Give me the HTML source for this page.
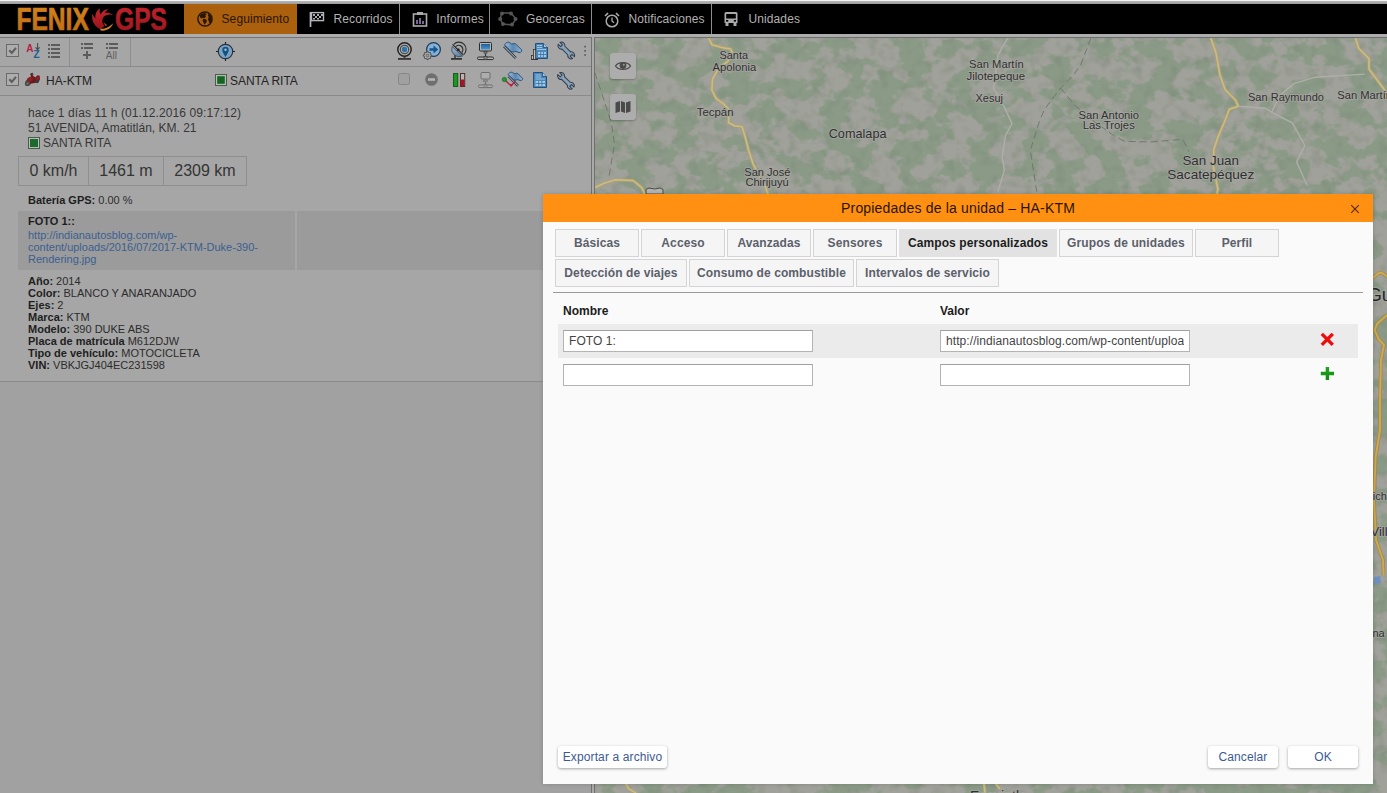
<!DOCTYPE html>
<html lang="es">
<head>
<meta charset="utf-8">
<title>Fenix GPS</title>
<style>
*{box-sizing:border-box;margin:0;padding:0}
html,body{width:1387px;height:793px;overflow:hidden}
body{position:relative;background:#a3a3a3;font-family:"Liberation Sans",sans-serif;font-size:12px;color:#222}
.abs{position:absolute}
/* top */
#topwhite{left:0;top:0;width:1387px;height:1px;background:#f4f4f4}
#topgray{left:0;top:1px;width:1387px;height:3px;background:linear-gradient(#b8b8b8,#9a9a9a)}
#hdr{left:0;top:4px;width:1387px;height:30px;background:#000}
#hdrsub{left:0;top:34px;width:1387px;height:3px;background:#adadad}
.mi{position:absolute;top:0;height:30px;color:#b2b2b2;font-size:12px;letter-spacing:.1px;line-height:31px;white-space:nowrap}
.mi .sep{position:absolute;right:0;top:0;width:1px;height:30px;background:#8c8c8c}
.mi svg{position:absolute;left:13px;top:7px}
.mi span{position:absolute;left:37.500px;top:0}
.mi.act{background:#aa600d;color:#2a1500}
/* left panel */
#lp{left:0;top:37px;width:591px;height:345px;background:#a6a6a6;border-top:1px solid #727272}
#lpbot{left:0;top:381px;width:591px;height:412px;background:#a1a1a1;border-top:1px solid #8b8b8b}
#split{left:591px;top:37px;width:4px;height:756px;background:#a9a9a9;border-left:1px solid #707070;border-right:1px solid #707070}
.hl{position:absolute;left:0;width:591px;height:1px;background:#8b8b8b}
.vl{position:absolute;width:1px;background:#8b8b8b}
.cb{position:absolute;width:12px;height:12px;border:1px solid #6f6f6f;background:#aeaeae}
.t12{position:absolute;font-size:12px;line-height:15px;color:#232323;white-space:nowrap}
.t11{position:absolute;font-size:11px;line-height:12px;color:#2c2c2c;white-space:nowrap}
.t11 b{color:#1e1e1e}
.gsq{position:absolute;width:11px;height:11px;border:1px solid #2b5a35;background:#a9b5aa}
.gsq i{position:absolute;left:1px;top:1px;width:7px;height:7px;background:#1f6b34}
/* map */
#map{left:595px;top:38px;width:792px;height:755px;background:#a0a39b;overflow:hidden}
.mbtn{position:absolute;width:26px;height:26px;border-radius:3px;background:#adadad;box-shadow:0 1px 2px rgba(0,0,0,.25)}
/* dialog */
#dlg{left:543px;top:194px;width:830px;height:590px;background:#fafafa;box-shadow:0 0 4px rgba(0,0,0,.18)}
#dtitle{left:0;top:0;width:830px;height:28px;background:#ff9012;color:#2a1400;font-size:14px;letter-spacing:.18px;line-height:28px;text-align:center}
.tab{position:absolute;height:28px;border:1px solid #d4d4d4;background:#f5f5f5;color:#5b606b;font-weight:bold;font-size:12px;letter-spacing:.1px;line-height:26px;text-align:center;white-space:nowrap}
.tab.sel{background:#e2e2e2;border-color:#e2e2e2;color:#1c1c1c}
.inp{position:absolute;width:250px;height:22px;background:#fff;border:1px solid #b4b4b4;border-top-color:#a0a0a0;font-size:12px;letter-spacing:.08px;line-height:20px;color:#444;padding:0 5px;white-space:nowrap}
.inp span{display:block;width:238px;height:20px;overflow:hidden}
.btn{position:absolute;height:22px;background:#fff;border-radius:3px;box-shadow:0 1px 3px rgba(0,0,0,.35);color:#3d5a92;font-size:12px;letter-spacing:.12px;line-height:22px;text-align:center;white-space:nowrap}
</style>
</head>
<body>
<div class="abs" id="topwhite"></div>
<div class="abs" id="topgray"></div>
<div class="abs" id="hdr">
<svg class="abs" style="left:0;top:0" width="184" height="30" viewBox="0 0 184 30">
<defs><linearGradient id="lgo" x1="0" y1="0" x2="0" y2="1"><stop offset="0" stop-color="#d6871f"/><stop offset="1" stop-color="#bd6a12"/></linearGradient>
<linearGradient id="lgr" x1="0" y1="0" x2="0" y2="1"><stop offset="0" stop-color="#c4262c"/><stop offset="1" stop-color="#9a141c"/></linearGradient></defs>
<text x="16.500" y="26" font-family="Liberation Sans" font-weight="bold" font-size="30.500" fill="url(#lgo)" stroke="url(#lgo)" stroke-width=".700" textLength="72.300" lengthAdjust="spacingAndGlyphs">FENIX</text>
<text x="115" y="26" font-family="Liberation Sans" font-weight="bold" font-size="30.500" fill="url(#lgr)" stroke="url(#lgr)" stroke-width=".600" textLength="52" lengthAdjust="spacingAndGlyphs">GPS</text>
<g id="phoenix"><path d="M113.300 11.300 C110.500 9.800 106.500 10.200 104 12.500 C101.500 15 101.800 19.500 104.500 21.800 L100.500 25.200 C96 23.500 91 18.500 92.300 9.800 C93.200 12 94.200 13.300 95.300 14.200 C95 10 96.500 6.500 100 4.200 C99.300 6.800 99.600 9 100.600 10.600 C102 7.200 105 5 108.400 5.300 C106.500 6.500 105.300 7.800 104.800 9.200 C107.500 8.200 111 9 113.300 11.300 Z" fill="url(#lgr)"/><path d="M100.300 24.800 C104.500 25.300 110 23 112.900 19.300 C112.200 23.800 106.500 27.500 100.500 26.500 Z" fill="#d08a2a"/><path d="M103.300 18.300 L107 21 L105.800 22.200 Z" fill="#b3501e"/></g>
</svg>
<div class="mi act" style="left:184px;width:112.800px"><svg width="16" height="16" viewBox="0 0 16 16"><circle cx="8" cy="8" r="7.100" fill="none" stroke="#2a1500" stroke-width="1.500"/><path d="M2.800 4.600 L5 2.600 L8.400 2 L9.600 3.400 L8.200 4.600 L9 5.800 L7.400 7.200 L5.800 6.800 L4.600 7.600 L3.200 6.400 Z M6.200 7.800 L8.800 8.200 L10 9.800 L9 11.800 L7.600 13.800 L6.600 11.800 L5.600 9.600 Z M11.400 2.800 L13.600 4.400 L14.600 6.600 L14.800 9 L13.800 11.600 L12.400 12.200 L11.600 9.800 L10.800 8 L11.800 6.200 L10.800 4.600 Z" fill="#2a1500"/></svg><span>Seguimiento</span></div>
<div class="mi" style="left:296px;width:104px"><svg width="16" height="16" viewBox="0 0 16 16"><path d="M1.500 1 V16" stroke="#b4b4c0" stroke-width="1.700" fill="none"/><rect x="2.500" y="1.600" width="12" height="8" fill="none" stroke="#b4b4c0" stroke-width="1.400"/><path d="M4 3h2v2H4zM8 3h2v2H8zM12 3h2v2h-2zM6 5h2v2H6zM10 5h2v2h-2zM4 7h2v1.5H4zM8 7h2v1.5H8z" fill="#aaa"/></svg><span>Recorridos</span><i class="sep"></i></div>
<div class="mi" style="left:398.800px;width:91.200px"><svg width="16" height="16" viewBox="0 0 16 16"><rect x="1.5" y="3" width="13" height="12" fill="none" stroke="#aaa" stroke-width="1.6"/><rect x="5" y="1" width="6" height="3" fill="#aaa"/><path d="M5 9v4M8 7v6M11 10v3" stroke="#9a7fc0" stroke-width="1.6"/></svg><span>Informes</span><i class="sep"></i></div>
<div class="mi" style="left:488.500px;width:103.500px"><svg style="left:9px" width="20" height="16" viewBox="0 0 20 16"><path d="M4 2 L13 2 L18 8 L14 14 L5 13 L2 8 Z" fill="none" stroke="#555" stroke-width="1.4"/><g fill="#555"><circle cx="4" cy="2.5" r="2"/><circle cx="13" cy="2.5" r="2"/><circle cx="17.5" cy="8" r="2"/><circle cx="14" cy="13.5" r="2"/><circle cx="5" cy="13" r="2"/><circle cx="2.2" cy="8" r="2"/></g></svg><span>Geocercas</span><i class="sep"></i></div>
<div class="mi" style="left:591px;width:121px"><svg style="left:12.500px;top:7.500px" width="16" height="16" viewBox="0 0 16 16"><circle cx="8" cy="9" r="5.800" fill="none" stroke="#aaa" stroke-width="1.5"/><path d="M8 5.5V9l2 1.7" fill="none" stroke="#aaa" stroke-width="1.3"/><path d="M1 4 L4 1.2 M15 4 L12 1.2" stroke="#aaa" stroke-width="1.6"/></svg><span>Notificaciones</span><i class="sep"></i></div>
<div class="mi" style="left:711px;width:100px"><svg style="left:12px" width="16" height="16" viewBox="0 0 16 16"><path d="M1.5 2.5 Q1.5 1 3 1 H13 Q14.500 1 14.500 2.500 V12 H1.500 Z" fill="#aaa"/><rect x="3.2" y="3" width="9.600" height="4.500" fill="#000"/><rect x="3" y="9" width="2.200" height="1.600" fill="#000"/><rect x="10.800" y="9" width="2.200" height="1.600" fill="#000"/><rect x="2.500" y="12" width="3" height="3" fill="#aaa"/><rect x="10.500" y="12" width="3" height="3" fill="#aaa"/></svg><span>Unidades</span></div>
</div>
<div class="abs" id="hdrsub"></div>
<div class="abs" id="lp">
<svg class="abs" style="left:0;top:-38px" width="591" height="100" viewBox="0 0 591 100">
<defs>
<linearGradient id="gw" x1="0" y1="0" x2="1" y2="1"><stop offset="0" stop-color="#9db8d0"/><stop offset="1" stop-color="#56799c"/></linearGradient>
<linearGradient id="gsc" x1="0" y1="0" x2="0" y2="1"><stop offset="0" stop-color="#1f5f96"/><stop offset="1" stop-color="#4f93c6"/></linearGradient>
<linearGradient id="gfl" x1="0" y1="0" x2="1" y2="0"><stop offset="0" stop-color="#9dbcd8"/><stop offset=".5" stop-color="#5d87b0"/><stop offset="1" stop-color="#8fb3d4"/></linearGradient>
</defs>
<!-- lines -->
<rect x="0" y="66" width="591" height="1" fill="#8a8a8a"/>
<rect x="0" y="95" width="591" height="1" fill="#8a8a8a"/>
<rect x="69" y="38" width="1" height="28" fill="#8e8e8e"/>
<rect x="130" y="38" width="1" height="28" fill="#8e8e8e"/>
<!-- checkboxes -->
<g id="cbx"><rect x="6.500" y="44.500" width="12" height="12" fill="#adadad" stroke="#6a6a6a"/><path d="M9.300 50.300 L11.800 53 L16 47.800" fill="none" stroke="#5e5e5e" stroke-width="2.100"/></g>
<use href="#cbx" y="29"/>
<!-- AZ -->
<text x="26.300" y="52.300" font-family="Liberation Sans" font-weight="bold" font-size="10" fill="#b51f45">A</text>
<text x="33.600" y="57.800" font-family="Liberation Sans" font-weight="bold" font-size="10" fill="#1d5f8f">Z</text>
<path d="M37.600 43 V49 M35.600 47.300 L37.600 49.600 L39.600 47.300" fill="none" stroke="#4a4a4a" stroke-width="1.100"/>
<!-- list -->
<g fill="#5c5c5c"><rect x="48" y="44" width="2" height="2"/><rect x="51" y="44" width="9" height="2"/><rect x="48" y="48" width="2" height="2"/><rect x="51" y="48" width="9" height="2"/><rect x="48" y="52" width="2" height="2"/><rect x="51" y="52" width="9" height="2"/><rect x="48" y="56" width="2" height="2"/><rect x="51" y="56" width="9" height="2"/></g>
<!-- list + -->
<g fill="#5c5c5c"><rect x="81" y="43" width="2" height="2"/><rect x="84" y="43" width="9" height="2"/><rect x="81" y="47" width="2" height="2"/><rect x="84" y="47" width="9" height="2"/><rect x="86" y="51" width="2" height="8"/><rect x="83" y="54" width="8" height="2"/></g>
<!-- list all -->
<g fill="#5c5c5c"><rect x="106" y="43" width="2" height="2"/><rect x="109" y="43" width="9" height="2"/><rect x="106" y="47" width="2" height="2"/><rect x="109" y="47" width="9" height="2"/></g>
<text x="105.800" y="59" font-family="Liberation Sans" font-size="10" fill="#606060">All</text>
<!-- target -->
<g><path d="M225.500 42 V61 M216 51.500 H235" stroke="#232323" stroke-width="1.200"/><circle cx="225.500" cy="51.500" r="7.200" fill="#7ca3c6" stroke="#24313c" stroke-width="1.200"/><path d="M225.500 57 C223.500 53.500 222.300 52 222.300 50 A3.200 3.200 0 0 1 228.700 50 C228.700 52 227.500 53.500 225.500 57 Z" fill="#15527f"/><circle cx="225.500" cy="49.800" r="1.200" fill="#9fc0dc"/></g>
<!-- webcam -->
<g><rect x="398" y="58" width="13" height="1.800" fill="#333"/><rect x="403.600" y="56" width="1.800" height="2.500" fill="#444"/><circle cx="404.500" cy="49.500" r="6.700" fill="#b0b0b0" stroke="#232323" stroke-width="1.500"/><circle cx="404.500" cy="49.500" r="4.200" fill="#b4b4b4" stroke="#4a4a4a" stroke-width="1.200"/><circle cx="404.500" cy="49.500" r="2.700" fill="#2e73ab"/></g>
<!-- arrow circle w gear -->
<g><circle cx="433.500" cy="49.500" r="6.900" fill="#86b0d5" stroke="#1c3a56" stroke-width="1.200"/><path d="M429.500 48.200 H433.500 V45.600 L438.200 49.500 L433.500 53.400 V50.800 H429.500 Z" fill="#14568d"/><path d="M431.64 54.78 L431.64 56.22 L430.42 56.20 L430.06 57.07 L430.94 57.92 L429.92 58.94 L429.07 58.06 L428.20 58.42 L428.22 59.64 L426.78 59.64 L426.80 58.42 L425.93 58.06 L425.08 58.94 L424.06 57.92 L424.94 57.07 L424.58 56.20 L423.36 56.22 L423.36 54.78 L424.58 54.80 L424.94 53.93 L424.06 53.08 L425.08 52.06 L425.93 52.94 L426.80 52.58 L426.78 51.36 L428.22 51.36 L428.20 52.58 L429.07 52.94 L429.92 52.06 L430.94 53.08 L430.06 53.93 L430.42 54.80 Z" fill="#b3b3b3" stroke="#4c4c4c" stroke-width=".900" stroke-linejoin="round"/><circle cx="427.500" cy="55.500" r="1.300" fill="#a6a6a6" stroke="#4c4c4c" stroke-width=".800"/></g>
<!-- sat dish -->
<g><rect x="451" y="58" width="11" height="1.800" fill="#333"/><path d="M455 54 V58.500" stroke="#3a3a3a" stroke-width="1.600"/><path d="M452.200 46.500 A7.500 7.500 0 0 0 462.500 56 Z" fill="url(#gw)" stroke="#33475a" stroke-width=".800"/><path d="M452.500 44.300 L463.500 55.200" stroke="#242424" stroke-width="1.100"/><circle cx="458.300" cy="49.800" r="1.400" fill="#1d1d1d"/><path d="M455.600 46.600 A4 4 0 0 1 461.700 52.500" fill="none" stroke="#2d2d2d" stroke-width="1.100"/><path d="M453.800 44.300 A6.800 6.800 0 0 1 464 54.300" fill="none" stroke="#2d2d2d" stroke-width="1.100"/></g>
<!-- network monitor -->
<g id="net"><rect x="479.500" y="42.500" width="12" height="8.500" rx="1" fill="#b2b6ba" stroke="#2c2c2c"/><rect x="481" y="44" width="9" height="5.500" fill="url(#gsc)"/><rect x="484" y="51.500" width="3" height="1.600" fill="#888" stroke="#333" stroke-width=".600"/><path d="M485.500 53.500 V57" stroke="#333" stroke-width="1.200"/><rect x="477.500" y="57" width="16" height="2.600" rx="1.300" fill="#b5b5b5" stroke="#2c2c2c"/><rect x="484" y="56.300" width="3" height="3.300" fill="#8a8a8a" stroke="#333" stroke-width=".600"/></g>
<!-- flag -->
<g><path d="M504 46.300 L515.800 58.200" stroke="#2b3a49" stroke-width="2.600"/><path d="M504 46.300 L515.800 58.200" stroke="#c1c7cc" stroke-width="1"/><path d="M504.500 44.800 C506 42 509 41.500 510.500 43.300 C512 45 513.500 43 515.500 43.800 L521.800 50 C522 52.500 519.500 53.300 517.500 52 C515.500 50.500 513.500 53 511.300 51.600 Z" fill="url(#gfl)" stroke="#27517b" stroke-width="1"/></g>
<!-- doc + bars -->
<g><path d="M535.500 43.500 H543.500 L547.500 47.500 V58.500 H535.500 Z" fill="#4a88ba" stroke="#23507a"/><path d="M543.500 43.500 V47.500 H547.500" fill="#a9c6e0" stroke="#1d4a74" stroke-width=".800"/><path d="M537 45.500 H542 M537 47.500 H542 M537 49.500 H546" stroke="#a7c7e3" stroke-width=".900"/><rect x="538" y="52" width="8" height="5" fill="#a7c7e3"/><path d="M538 54.500 H546 M540.700 52 V57 M543.400 52 V57" stroke="#2b6ea8" stroke-width=".800"/><rect x="531.500" y="55.500" width="2" height="4" fill="#b8b8b8" stroke="#333" stroke-width=".800"/><rect x="533.500" y="49.500" width="2.200" height="10" fill="#c2c2c2" stroke="#333" stroke-width=".800"/><rect x="531" y="59" width="7" height="1" fill="#333"/></g>
<!-- wrench -->
<g id="wr"><path transform="translate(566.300 50.500) rotate(45)" d="M -4.03 -2.00 L 4.03 -2.00 A 3.50 3.50 0 0 1 10.15 -1.30 L 6.70 -1.30 L 6.70 1.30 L 10.15 1.30 A 3.50 3.50 0 0 1 4.03 2.00 L -4.03 2.00 A 3.50 3.50 0 0 1 -10.15 1.30 L -6.70 1.30 L -6.70 -1.30 L -10.15 -1.30 A 3.50 3.50 0 0 1 -4.03 -2.00 Z" fill="#8aa2b8" stroke="#2c3b4a" stroke-width="1" stroke-linejoin="round"/></g>
<!-- dots -->
<g fill="#555"><rect x="584.300" y="45.800" width="1.600" height="1.600"/><rect x="584.300" y="50" width="1.600" height="1.600"/><rect x="584.300" y="54.200" width="1.600" height="1.600"/></g>
<!-- row 2 -->
<g transform="translate(24,73)"><path d="M1 9.500 L4 5 L7 3.500 L6.500 1.500 L8.200 .5 L9.200 3 L11.500 4.500 L13 2.500 L15.500 2.500 L16 6.500 L14.500 9 L11 10 L7.500 10.500 L4.500 12.800 L1.800 12.800 Z" fill="#6c1a1d"/><path d="M3.500 5.500 L7 3.700 L9.500 5.500 L7 8.500 L3.500 9 Z M11 5 L15.500 3.500 L15.800 6.500 L12.500 8 Z" fill="#8e1f25"/><circle cx="3.500" cy="10.500" r="2.600" fill="#4a4a4a"/><circle cx="3.500" cy="10.500" r="1.100" fill="#777"/><path d="M6.300 1.200 L8.600 .3 L9 1.600" fill="none" stroke="#222" stroke-width="1"/><circle cx="13" cy="8.500" r="1.800" fill="#3a3a3a"/></g>
<g><rect x="215.500" y="74.500" width="11" height="11" fill="#b3beb5" stroke="#4b5b4d"/><rect x="217.200" y="76.200" width="7.600" height="7.600" fill="#15651f"/></g>
<rect x="398.500" y="73.500" width="11" height="11" rx="2" fill="#a0a0a0" stroke="#858585"/>
<g><circle cx="431.500" cy="79.500" r="6.300" fill="#6f6f6f"/><rect x="428" y="78.200" width="7" height="2.600" fill="#b4b4b4"/></g>
<g><rect x="453.500" y="73.500" width="4.200" height="13" fill="#1a9a1c" stroke="#1c5a1d"/><rect x="460.500" y="73.500" width="4.200" height="13" fill="#b6b6b6" stroke="#4a3030"/><rect x="461" y="79.500" width="3.200" height="6.500" fill="#b3101f"/></g>
<g><rect x="481" y="72.500" width="9" height="6.500" rx="1" fill="#adadad" stroke="#6e6e6e"/><rect x="483.500" y="80" width="4" height="1.600" fill="#999" stroke="#6e6e6e" stroke-width=".600"/><path d="M485.500 82 V85" stroke="#6e6e6e" stroke-width="1.200"/><rect x="478.500" y="85" width="14" height="2.600" rx="1.300" fill="#b0b0b0" stroke="#6e6e6e"/><rect x="484" y="84.300" width="3" height="3.300" fill="#999" stroke="#6e6e6e" stroke-width=".600"/></g>
<g><path d="M508.500 76 L518 85.800" stroke="#2b3a49" stroke-width="2.600"/><path d="M508.500 76 L518 85.800" stroke="#c1c7cc" stroke-width="1"/><path d="M508 74.500 C509.500 72 512 71.500 513.300 73 C514.600 74.500 516 72.800 517.800 73.500 L522.600 78.300 C522.800 80.500 520.600 81.200 519 80 C517.300 78.800 515.600 81 513.700 79.800 Z" fill="url(#gfl)" stroke="#27517b" stroke-width="1"/><path d="M505 80 L509.500 84.500 L511.500 85.500 L515 81.500" fill="none" stroke="#c1183a" stroke-width="1.300"/><path d="M509.300 84 L512.800 84.500 L511 87.300 Z" fill="#c1183a"/><circle cx="504.400" cy="79.500" r="2.200" fill="#1e9a2a" stroke="#1c6a22" stroke-width=".600"/></g>
<g><path d="M533.500 72.500 H542.500 L546.500 76.500 V87.500 H533.500 Z" fill="#4a88ba" stroke="#23507a"/><path d="M542.500 72.500 V76.500 H546.500" fill="#a9c6e0" stroke="#1d4a74" stroke-width=".800"/><path d="M535.500 75 H541 M535.500 77 H541 M535.500 79 H545" stroke="#a7c7e3" stroke-width=".900"/><rect x="535.500" y="81" width="9.500" height="5" fill="#a7c7e3"/><path d="M535.500 83.500 H545 M538.700 81 V86 M541.900 81 V86" stroke="#2b6ea8" stroke-width=".800"/></g>
<use href="#wr" y="30.300" x="-.400"/>
</svg>
<div class="t12" style="left:46px;top:36px">HA-KTM</div>
<div class="t12" style="left:230px;top:36px;letter-spacing:-.05px">SANTA RITA</div>
<div class="t12" style="left:28px;top:68px;color:#373737"><span style="letter-spacing:.1px">hace 1 días 11 h (01.12.2016 09:17:12)</span><br>51 AVENIDA, Amatitlán, KM. 21<br><span style="padding-left:15px">SANTA RITA</span></div>
<div class="abs" style="left:28px;top:99px;width:12px;height:12px;border:1px solid #4b5b4d;background:#b3beb5"><div style="margin:1px;width:8px;height:8px;background:#1d6a2c"></div></div>
<div class="abs" id="stat" style="left:18px;top:118px;height:30px;width:229px;border:1px solid #8e8e8e;font-size:16px;line-height:28px;color:#343434;white-space:nowrap">
<div class="abs" style="left:0;top:0;width:70px;height:28px;border-right:1px solid #8e8e8e;text-align:center">0 km/h</div>
<div class="abs" style="left:70px;top:0;width:75px;height:28px;border-right:1px solid #8e8e8e;text-align:center">1461 m</div>
<div class="abs" style="left:145px;top:0;width:82px;height:28px;text-align:center">2309 km</div>
</div>
<div class="t11" style="left:28px;top:156px"><b>Batería GPS:</b> 0.00 %</div>
<div class="abs" style="left:18px;top:173px;width:277px;height:59px;background:#9b9b9b"></div>
<div class="abs" style="left:297px;top:173px;width:294px;height:59px;background:#9b9b9b"></div>
<div class="t11" style="left:28px;top:177px"><b>FOTO 1::</b></div>
<div class="t11" style="left:28px;top:191px;color:#3a5f92">http://indianautosblog.com/wp-<br>content/uploads/2016/07/2017-KTM-Duke-390-<br>Rendering.jpg</div>
<div class="t11" style="left:28px;top:237px"><b>Año:</b> 2014<br><b>Color:</b> BLANCO Y ANARANJADO<br><b>Ejes:</b> 2<br><b>Marca:</b> KTM<br><b>Modelo:</b> 390 DUKE ABS<br><b>Placa de matrícula</b> M612DJW<br><b>Tipo de vehículo:</b> MOTOCICLETA<br><b>VIN:</b> VBKJGJ404EC231598</div>
</div>
<div class="abs" id="lpbot"></div>
<div class="abs" id="split"></div>
<div class="abs" style="left:594px;top:37px;width:793px;height:1px;background:#6e6e6e"></div>
<div class="abs" id="map">
<svg class="abs" style="left:0;top:0" width="792" height="755" viewBox="595 38 792 755">
<defs>
<filter id="terr" x="0" y="0" width="100%" height="100%" color-interpolation-filters="sRGB">
<feTurbulence type="fractalNoise" baseFrequency="0.04 0.05" numOctaves="4" seed="7" result="n"/>
<feColorMatrix in="n" type="matrix" values="0 0 0 0 0.545  0 0 0 0 0.604  0 0 0 0 0.530  10 0 0 0 -4.6" result="g"/>
<feTurbulence type="fractalNoise" baseFrequency="0.09" numOctaves="2" seed="3" result="n2"/>
<feColorMatrix in="n2" type="matrix" values="0 0 0 0 0.47  0 0 0 0 0.52  0 0 0 0 0.46  0 0 0 1.1 -0.52" result="sh"/>
<feFlood flood-color="#a0a19a" result="bg"/>
<feMerge><feMergeNode in="bg"/><feMergeNode in="g"/><feMergeNode in="sh"/></feMerge>
</filter>
</defs>
<rect x="595" y="38" width="792" height="755" filter="url(#terr)"/>
<!-- yellow roads -->
<g fill="none" stroke-linejoin="round" stroke-linecap="round">
<g id="yr"><path d="M708.600 38 L711.900 44.700 L723.800 47.900 L730.700 49 L733 55 L727 62 L718.400 68.400 L712.500 79.300 L711.900 90.100 L716.200 98.700 L723.800 104.100 L729.200 109.500 L728.500 122.500 L734.600 125.800 L742.200 126.800 L745.400 137.700 L748.700 150.600 L753 163.600 L757 172 L765 186 L768 194"/>
<path d="M595 187.400 L604.800 183 L615.600 179.800 L633 180.500 L641.600 187.400 L644.800 194"/>
<path d="M1210.700 38 L1215.900 52.400 L1220 75.200 L1225.200 89.700 L1235.500 100 L1238.200 106.200 L1229.300 109.300 L1224.100 122.800 L1217.900 137.200 L1213.800 149.700 L1213 165 L1217.900 189 L1217 194"/>
<path d="M1355.500 38 L1358.600 48.300 L1369 58.600 L1369 69 L1378.300 81.400 L1384.500 89.700 L1387 95"/>
<path d="M626 784 L629 789 L636 793"/><path d="M984 784 L985 793"/><path d="M996 784 L1000 789"/></g>
</g>
<use href="#yr" fill="none" stroke="#b2a169" stroke-width="3.300" stroke-linejoin="round"/>
<use href="#yr" fill="none" stroke="#c6bc8e" stroke-width="1.600" stroke-linejoin="round"/>
<g fill="none" stroke-linejoin="round"><g id="hw"><path d="M1370 279 L1374 277 L1379.200 272.500 L1383 273.500 L1387 276.600"/>
<path d="M1387 315 L1377 324 L1374.700 330 L1378.500 339 L1384 345 L1381 360 L1380 400 L1380 430 L1375.600 456.700 L1374 500 L1376 540 L1383 560 L1383.600 575"/></g></g>
<use href="#hw" fill="none" stroke="#a68a45" stroke-width="3.600" stroke-linejoin="round"/>
<use href="#hw" fill="none" stroke="#cdaa55" stroke-width="1.900" stroke-linejoin="round"/>
<!-- light roads -->
<g fill="none" stroke="#aeafa9" stroke-width="1.400" stroke-linejoin="round">
<path d="M1007.600 38 L997.900 55.500 L993.600 88 L1004.400 107.400 L1012 123.600 L1005.500 135.500 L1002.200 157.100 L1004.400 170.100 L997.900 191.700"/>
<path d="M1238.200 106.200 L1265.500 108.300 L1271.700 112.400 L1292.400 122.800 L1304.800 145.500 L1296.600 162 L1306.900 184.800"/>
<path d="M1271.700 112.400 L1280 95 L1294.500 83.400 L1315.200 77.200 L1364.800 74.100"/>
</g>
<!-- dashed boundaries -->
<g fill="none" stroke="#73766f" stroke-width="1" stroke-dasharray="7 4">
<path d="M595 72.800 L611.300 122.500 L614.500 144 L609 176.600"/>
<path d="M1091 38 L1081 64 L1073.600 75 L1060.600 88 L1044.400 109.500 L1039 122.500 L1030.300 150.600 L1036.800 191.700"/>
<path d="M1060.600 88 L1075.800 106.300 L1095 122 L1113.600 135.500 L1124.400 141.300 L1150.400 142 L1182.800 139.300 L1189 151.700"/>
</g>
<!-- water -->
<path d="M1374 577 L1380 576 L1381 583 L1375 584 Z" fill="#6d90c2"/>
<!-- shield -->
<path d="M646 194 V189.500 L649 188 L654.500 189 L660 188 L663 189.500 V194 Z" fill="#b4b4b0" stroke="#4a4a4a" stroke-width="1"/>
<!-- labels -->
<g font-family="Liberation Sans" fill="#303030" stroke="#a6a7a1" stroke-width="1.600" stroke-linejoin="round" paint-order="stroke">
<text x="719.5" y="58.7" font-size="11" textLength="28.5" lengthAdjust="spacingAndGlyphs">Santa</text>
<text x="712.5" y="70.6" font-size="11" textLength="43.7" lengthAdjust="spacingAndGlyphs">Apolonia</text>
<text x="696.7" y="116.0" font-size="11" textLength="36.8" lengthAdjust="spacingAndGlyphs">Tecpán</text>
<text x="828.7" y="137.7" font-size="13" textLength="57.8" lengthAdjust="spacingAndGlyphs">Comalapa</text>
<text x="744.3" y="175.5" font-size="11" textLength="46.1" lengthAdjust="spacingAndGlyphs">San José</text>
<text x="745.4" y="186.3" font-size="11" textLength="43.3" lengthAdjust="spacingAndGlyphs">Chirijuyú</text>
<text x="969.1" y="68.4" font-size="11" textLength="54.7" lengthAdjust="spacingAndGlyphs">San Martín</text>
<text x="966.5" y="80.3" font-size="11" textLength="58.5" lengthAdjust="spacingAndGlyphs">Jilotepeque</text>
<text x="975.6" y="101.5" font-size="11" textLength="27.3" lengthAdjust="spacingAndGlyphs">Xesuj</text>
<text x="1078.6" y="118.6" font-size="11" textLength="60.5" lengthAdjust="spacingAndGlyphs">San Antonio</text>
<text x="1082.7" y="129.4" font-size="11" textLength="52.1" lengthAdjust="spacingAndGlyphs">Las Trojes</text>
<text x="1248.0" y="100.6" font-size="11" textLength="76.0" lengthAdjust="spacingAndGlyphs">San Raymundo</text>
<text x="1337.3" y="98.6" font-size="11" textLength="54.7" lengthAdjust="spacingAndGlyphs">San Martín</text>
<text x="1182.4" y="164.8" font-size="13" textLength="56.6" lengthAdjust="spacingAndGlyphs">San Juan</text>
<text x="1167.2" y="178.6" font-size="13" textLength="87.0" lengthAdjust="spacingAndGlyphs">Sacatepéquez</text>
<text x="1367.400" y="300.500" font-size="18.500" fill="#262626">Gu</text>
<text x="1358.800" y="499.700" font-size="11">Chich</text>
<text x="1370.500" y="535.800" font-size="13">Vill</text>
<text x="1370" y="637" font-size="11">ina</text>
<text x="970" y="800.500" font-size="14">Escuintla</text>
</g>
</svg>
<div class="mbtn" style="left:15px;top:15px"><svg width="26" height="26" viewBox="0 0 26 26"><path d="M5.500 13 C8 8.500 18 8.500 20.500 13 C18 17.500 8 17.500 5.500 13 Z" fill="none" stroke="#4a4a4a" stroke-width="1.200"/><circle cx="13" cy="12.600" r="3.300" fill="#4a4a4a"/><circle cx="13.800" cy="11.700" r="1" fill="#9a9a9a"/></svg></div>
<div class="mbtn" style="left:15px;top:56px"><svg width="26" height="26" viewBox="0 0 26 26"><path d="M5.500 8.500 L10 7 V17.500 L5.500 19 Z M11 7 L15 8.500 V19 L11 17.500 Z M16 8.500 L20.500 7 V17.500 L16 19 Z" fill="#4a4a4a"/></svg></div>
</div>
<div class="abs" id="dlg"><div class="abs" id="dtitle">Propiedades de la unidad – HA-KTM</div>
<svg class="abs" style="left:807px;top:10px" width="10" height="10" viewBox="0 0 10 10"><path d="M1.200 1.200 L8.800 8.800 M8.800 1.200 L1.200 8.800" stroke="#5a2c02" stroke-width="1.200" fill="none"/></svg>
<div class="tab" style="left:12px;top:35px;width:84px">Básicas</div>
<div class="tab" style="left:98px;top:35px;width:84px">Acceso</div>
<div class="tab" style="left:184px;top:35px;width:84px">Avanzadas</div>
<div class="tab" style="left:270px;top:35px;width:84px">Sensores</div>
<div class="tab sel" style="left:356px;top:35px;width:158px">Campos personalizados</div>
<div class="tab" style="left:516px;top:35px;width:134px">Grupos de unidades</div>
<div class="tab" style="left:652px;top:35px;width:84px">Perfil</div>
<div class="tab" style="left:12px;top:65px;width:132px">Detección de viajes</div>
<div class="tab" style="left:146px;top:65px;width:165px">Consumo de combustible</div>
<div class="tab" style="left:313px;top:65px;width:143px">Intervalos de servicio</div>
<div class="abs" style="left:10px;top:98px;width:810px;height:1px;background:#9a9a9a"></div>
<div class="abs" style="left:20px;top:110px;font-weight:bold;font-size:12px;line-height:14px;color:#1c1c1c">Nombre</div>
<div class="abs" style="left:397px;top:110px;font-weight:bold;font-size:12px;line-height:14px;color:#1c1c1c">Valor</div>
<div class="abs" style="left:15px;top:130px;width:800px;height:34px;background:#ebebeb"></div>
<div class="inp" style="left:20px;top:136px"><span>FOTO 1:</span></div>
<div class="inp" style="left:397px;top:136px"><span>http://indianautosblog.com/wp-content/uploads/2016/07/2017</span></div>
<div class="inp" style="left:20px;top:170px"></div>
<div class="inp" style="left:397px;top:170px"></div>
<svg class="abs" style="left:776px;top:137px" width="17" height="17" viewBox="0 0 17 17"><g transform="translate(8.300 8.400) rotate(45)" fill="#ee0b0b"><rect x="-7.750" y="-1.700" width="15.500" height="3.400"/><rect x="-1.700" y="-7.750" width="3.400" height="15.500"/></g></svg>
<svg class="abs" style="left:776px;top:171px" width="17" height="17" viewBox="0 0 17 17"><defs><linearGradient id="gpl" x1="0" y1="0" x2="0" y2="1"><stop offset="0" stop-color="#22a322"/><stop offset="1" stop-color="#118a11"/></linearGradient></defs><path d="M6.700 1.900 H10.100 V6.800 H15 V10.200 H10.100 V15.100 H6.700 V10.200 H1.800 V6.800 H6.700 Z" fill="url(#gpl)"/></svg>
<div class="btn" style="left:15px;top:552px;width:109px">Exportar a archivo</div>
<div class="btn" style="left:665px;top:552px;width:70px">Cancelar</div>
<div class="btn" style="left:745px;top:552px;width:70px">OK</div>
</div>
</body>
</html>
